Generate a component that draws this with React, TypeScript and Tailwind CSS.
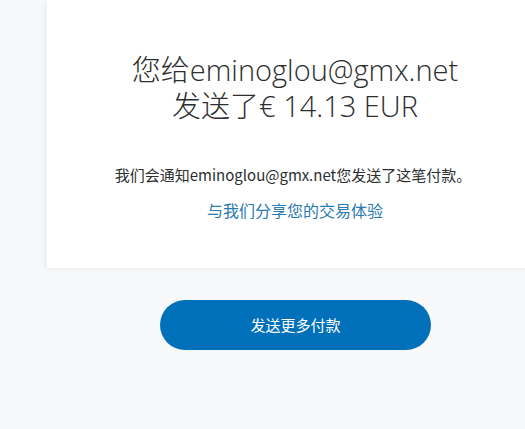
export default function App() {
  return (
    <div className="relative h-[429px] w-[525px] overflow-hidden bg-[#f6f8fa]">
      <div className="h-[268px] w-[496px] ml-[47px] bg-white shadow-[-3px_1px_4px_rgba(0,0,0,0.04)]">
        <div className="flex flex-col items-center pt-[52px] font-['Open_Sans','Noto_Sans_CJK_SC',sans-serif] text-[#2c2e2f]">
          <h1 className="text-center text-[29px] font-light leading-[36px]">
            您给eminoglou@gmx.net
            <br />
            发送了€ 14.13 EUR
          </h1>
        </div>
        <p className="mt-[40px] -ml-[4px] text-center font-['Noto_Sans_CJK_SC',sans-serif] text-[15px] leading-[22px] text-[#2c2e2f]">
          我们会通知eminoglou@gmx.net您发送了这笔付款。
        </p>
        <p className="mt-[12px] text-center font-['Noto_Sans_CJK_SC',sans-serif] text-[16px] leading-[24px] text-[#2a7bb0]">
          与我们分享您的交易体验
        </p>
      </div>
      <div className="mt-[32px] ml-[160px] flex h-[50px] w-[271px] items-center justify-center rounded-full bg-[#0070ba] font-['Noto_Sans_CJK_SC',sans-serif] text-[15px] text-white">
        发送更多付款
      </div>
    </div>
  );
}
